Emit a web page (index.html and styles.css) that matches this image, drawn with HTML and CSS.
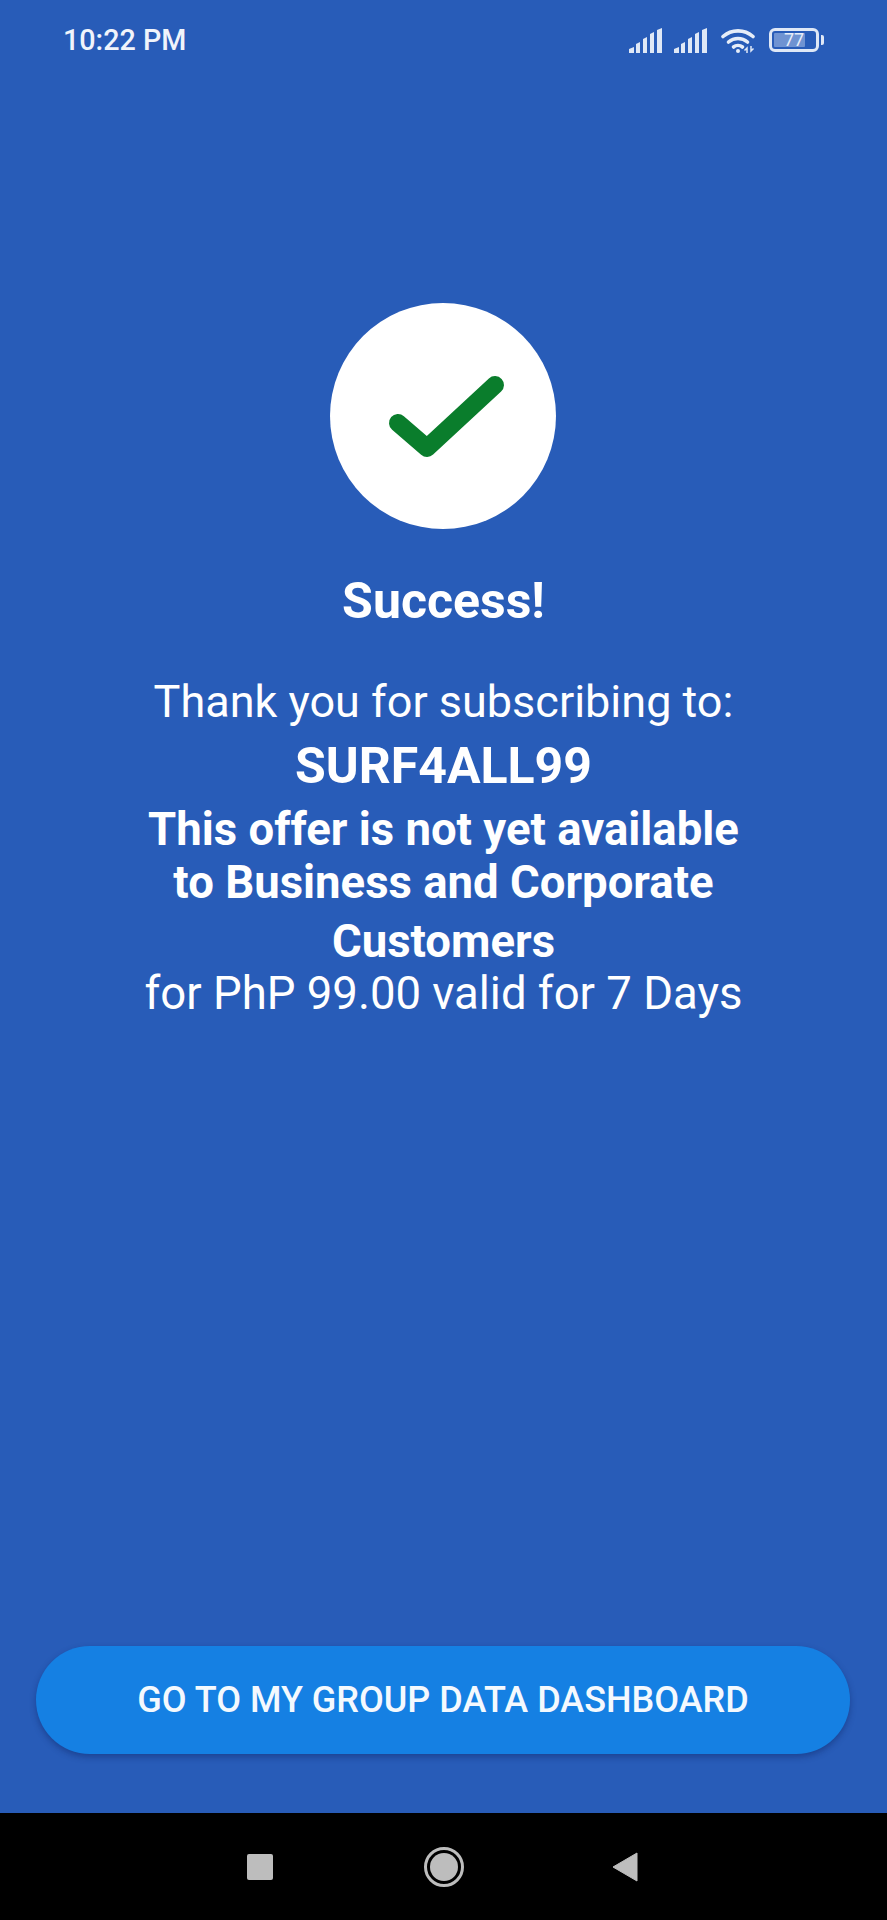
FILE: index.html
```html
<!DOCTYPE html>
<html lang="en">
<head>
<meta charset="utf-8">
<title>Success</title>
<link rel="stylesheet" href="styles.css">
</head>
<body>
<div class="screen">
  <header class="status">
    <span class="time">10:22 PM</span>
    <div class="status-icons">
      <svg class="signal" viewBox="0 0 34 25"><g fill="#dfe8f6"><path d="M0 21L5 19V25H0Z"/><path d="M7 16L11 14V25H7Z"/><path d="M14 11L18 9V25H14Z"/><path d="M21 6L25 4V25H21Z"/><path d="M28 2L33 0V25H28Z"/></g></svg>
      <svg class="signal" viewBox="0 0 34 25"><g fill="#dfe8f6"><path d="M0 21L5 19V25H0Z"/><path d="M7 16L11 14V25H7Z"/><path d="M14 11L18 9V25H14Z"/><path d="M21 6L25 4V25H21Z"/><path d="M28 2L33 0V25H28Z"/></g></svg>
      <svg class="wifi" viewBox="0 0 37 25"><g fill="none" stroke="#e6edf8" stroke-width="3.6" stroke-linecap="round"><path d="M2 8.500C10.500 1 23.500 1 32 8.500"/><path d="M7.500 14C13 9.300 21 9.300 26.500 14"/><path d="M12.500 19C15 17 19 17 21.500 19"/></g><circle cx="17" cy="23" r="2" fill="#e6edf8"/><path d="M26 25v-5l-2.500 2.500M30 18v5l2.500-2.500" fill="none" stroke="#dfe8f6" stroke-width="1.500"/></svg>
      <div class="battery-wrap">
        <div class="battery"><div class="battery-fill"></div><span class="battery-num">77</span></div>
        <div class="battery-nub"></div>
      </div>
    </div>
  </header>

  <main class="content">
    <div class="badge">
      <svg class="check" viewBox="0 0 226 226"><path d="M68 120L97 145L165 82" fill="none" stroke="#0a7d2c" stroke-width="18" stroke-linecap="round" stroke-linejoin="round"/></svg>
    </div>
    <h1 class="title">Success!</h1>
    <p class="line">Thank you for subscribing to:</p>
    <p class="plan">SURF4ALL99</p>
    <p class="offer">This offer is not yet available<br>to Business and Corporate</p>
    <p class="offer offer-last">Customers</p>
    <p class="line line-price">for PhP 99.00 valid for 7 Days</p>
  </main>

  <div class="action">
    <button class="cta" type="button">GO TO MY GROUP DATA DASHBOARD</button>
  </div>

  <nav class="navbar">
    <span class="nav-square"></span>
    <span class="nav-home"><span class="nav-home-dot"></span></span>
    <svg class="nav-back" viewBox="0 0 26 30"><path d="M25 1V29L1 15Z" fill="#bdbdbd" stroke="#bdbdbd" stroke-linejoin="round"/></svg>
  </nav>
</div>
</body>
</html>
```
FILE: styles.css
```css
html, body {
  margin: 0;
  padding: 0;
}
.screen {
  width: 887px;
  height: 1920px;
  display: flex;
  flex-direction: column;
  background: #285cb8;
  color: #fff;
  font-family: Roboto, "Liberation Sans", sans-serif;
  overflow: hidden;
}
.status {
  height: 80px;
  flex: none;
  display: flex;
  align-items: center;
  justify-content: space-between;
  padding: 0 63px 0 63px;
}
.time {
  font-size: 28.7px;
  font-weight: 500;
  color: #f0f4fb;
}
.status-icons {
  display: flex;
  align-items: center;
  gap: 11px;
}
.signal {
  width: 34px;
  height: 25px;
  display: block;
}
.wifi {
  width: 37px;
  height: 25px;
  display: block;
  margin-left: 2px;
}
.battery-wrap {
  display: flex;
  align-items: center;
  gap: 2px;
}
.battery {
  position: relative;
  width: 50px;
  height: 24px;
  box-sizing: border-box;
  border: 3px solid #dfe8f6;
  border-radius: 6px;
  display: flex;
  align-items: center;
  justify-content: center;
  overflow: hidden;
}
.battery-fill {
  position: absolute;
  left: 2px;
  top: 2px;
  bottom: 2px;
  width: 70%;
  background: #6f93d2;
  border-radius: 1px;
}
.battery-num {
  position: relative;
  font-size: 18px;
  font-weight: 400;
  line-height: 18px;
  color: #e8eef9;
}
.battery-nub {
  width: 3px;
  height: 10px;
  background: #dfe8f6;
  border-radius: 0 2px 2px 0;
}
.content {
  flex: 1;
  display: flex;
  flex-direction: column;
  align-items: center;
  text-align: center;
}
.badge {
  width: 226px;
  height: 226px;
  margin: 223px 1px 0 0;
  border-radius: 50%;
  background: #fff;
  flex: none;
}
.check {
  width: 226px;
  height: 226px;
  display: block;
}
.title {
  margin: 42px 0 0;
  font-size: 50px;
  line-height: 60px;
  font-weight: 700;
}
.line {
  margin: 39px 0 0;
  font-size: 45px;
  line-height: 64px;
  font-weight: 400;
}
.plan {
  margin: 0;
  font-size: 50px;
  line-height: 64px;
  font-weight: 700;
}
.offer {
  margin: 5px 0 0;
  font-size: 45.500px;
  line-height: 53px;
  font-weight: 700;
}
.offer-last {
  margin-top: 6px;
}
.line-price {
  margin-top: -6px;
  font-size: 45.500px;
}
.action {
  flex: none;
  padding: 0 37px 59px 36px;
}
.cta {
  display: block;
  width: 100%;
  height: 108px;
  border: 0;
  border-radius: 54px;
  background: #1580e3;
  color: #f4f9fe;
  font-family: inherit;
  font-size: 36px;
  font-weight: 500;
  box-shadow: 0 3px 6px rgba(10, 30, 90, 0.4);
}
.navbar {
  height: 107px;
  flex: none;
  background: #000;
  display: flex;
  align-items: center;
  justify-content: center;
  box-sizing: border-box;
  padding-right: 2px;
}
.nav-square {
  width: 26px;
  height: 26px;
  border-radius: 2px;
  background: #bdbdbd;
}
.nav-home {
  width: 40px;
  height: 40px;
  margin: 0 148px 0 151px;
  box-sizing: border-box;
  border: 3px solid #bdbdbd;
  border-radius: 50%;
  display: flex;
  align-items: center;
  justify-content: center;
}
.nav-home-dot {
  width: 28px;
  height: 28px;
  border-radius: 50%;
  background: #bdbdbd;
}
.nav-back {
  width: 26px;
  height: 30px;
  display: block;
}
```
